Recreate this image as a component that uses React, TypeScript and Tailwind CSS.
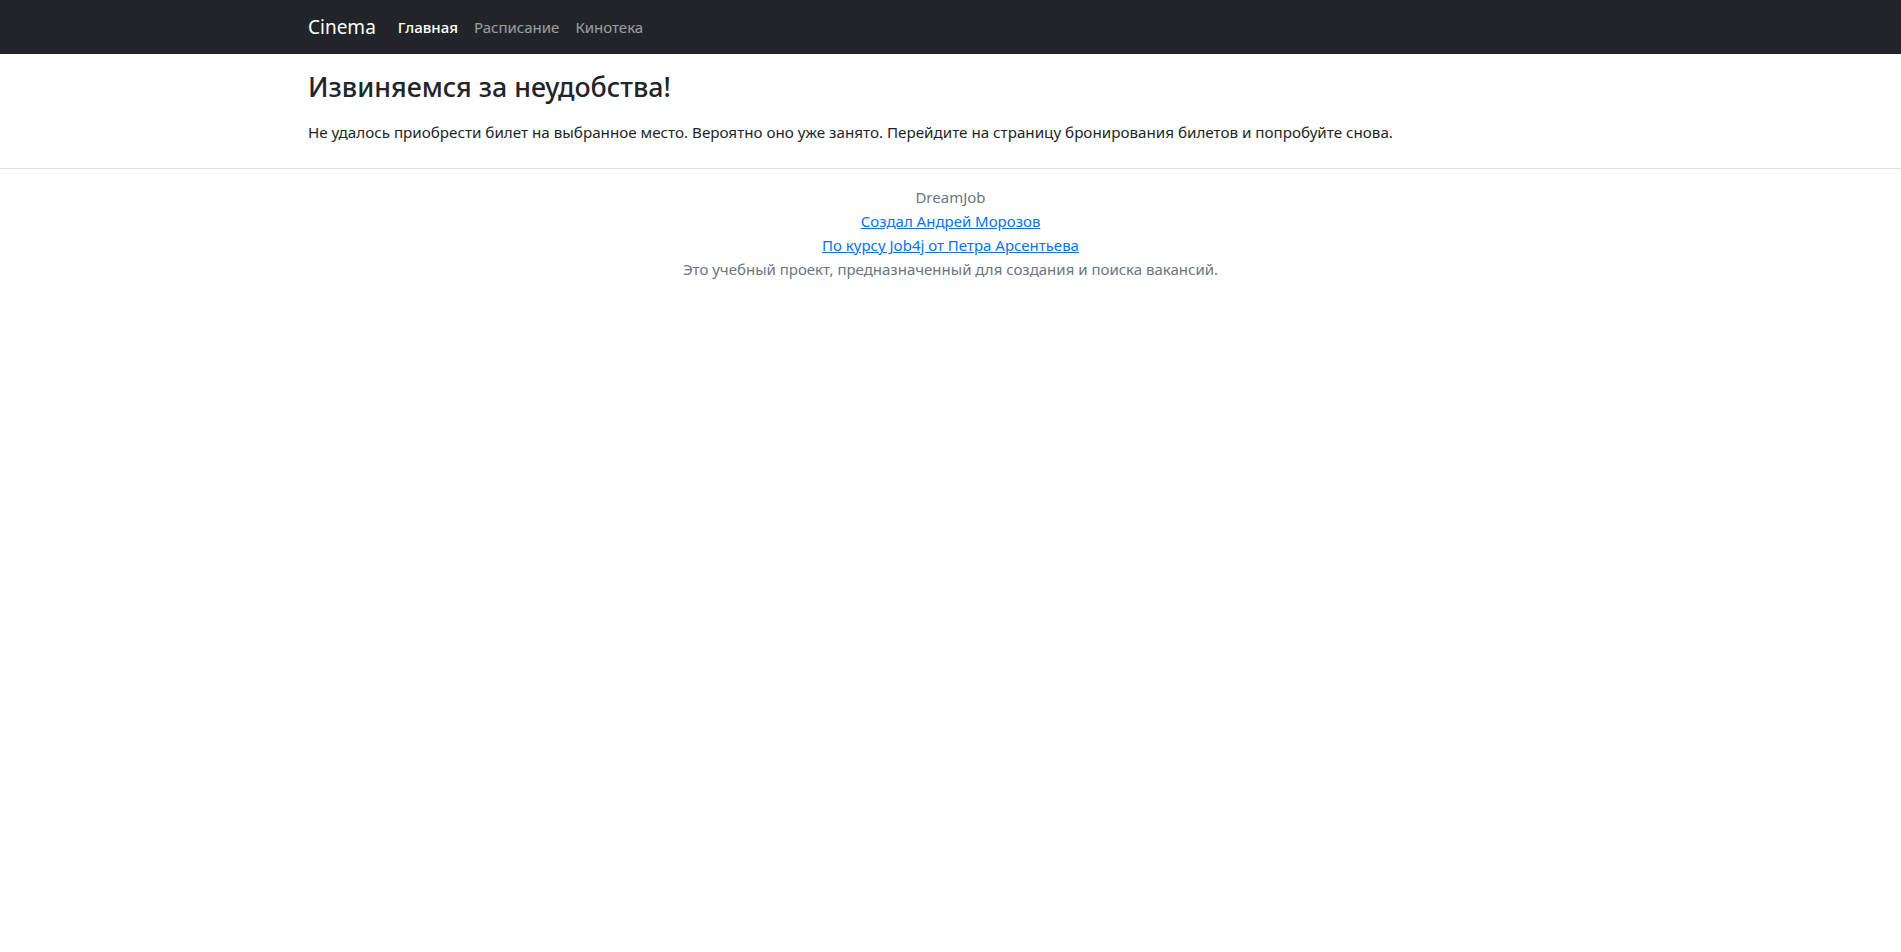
export default function App() {
  const font = { fontFamily: '"Noto Sans", "Open Sans", Arial, sans-serif' };
  return (
    <div className="min-h-screen bg-white text-[#212529]" style={font}>
      <nav className="h-[54px] bg-[#212529]">
        <div className="mx-auto flex h-full w-[1285px] items-center">
          <a href="#" className="mr-[22px] text-[19px] text-white">
            Cinema
          </a>
          <div className="flex items-center gap-[16px] text-[15px]">
            <a href="#" className="font-medium text-white">
              Главная
            </a>
            <a href="#" className="text-white/55">
              Расписание
            </a>
            <a href="#" className="text-white/55">
              Кинотека
            </a>
          </div>
        </div>
      </nav>

      <main className="mx-auto w-[1285px] pt-[16px] pb-[24px]">
        <h3 className="mb-[16px] text-[26.8px] leading-[34px] font-medium">
          Извиняемся за неудобства!
        </h3>
        <p className="text-[15.2px] leading-[24px]">
          Не удалось приобрести билет на выбранное место. Вероятно оно уже
          занято. Перейдите на страницу бронирования билетов и попробуйте
          снова.
        </p>
      </main>

      <footer className="border-t border-[#dee2e6] pt-[16px] text-center text-[15px] leading-[24px] text-[#6c757d]">
        <div>DreamJob</div>
        <div>
          <a href="#" className="text-[#0d6efd] underline">
            Создал Андрей Морозов
          </a>
        </div>
        <div>
          <a href="#" className="text-[#0d6efd] underline">
            По курсу Job4j от Петра Арсентьева
          </a>
        </div>
        <div>Это учебный проект, предназначенный для создания и поиска вакансий.</div>
      </footer>
    </div>
  );
}
